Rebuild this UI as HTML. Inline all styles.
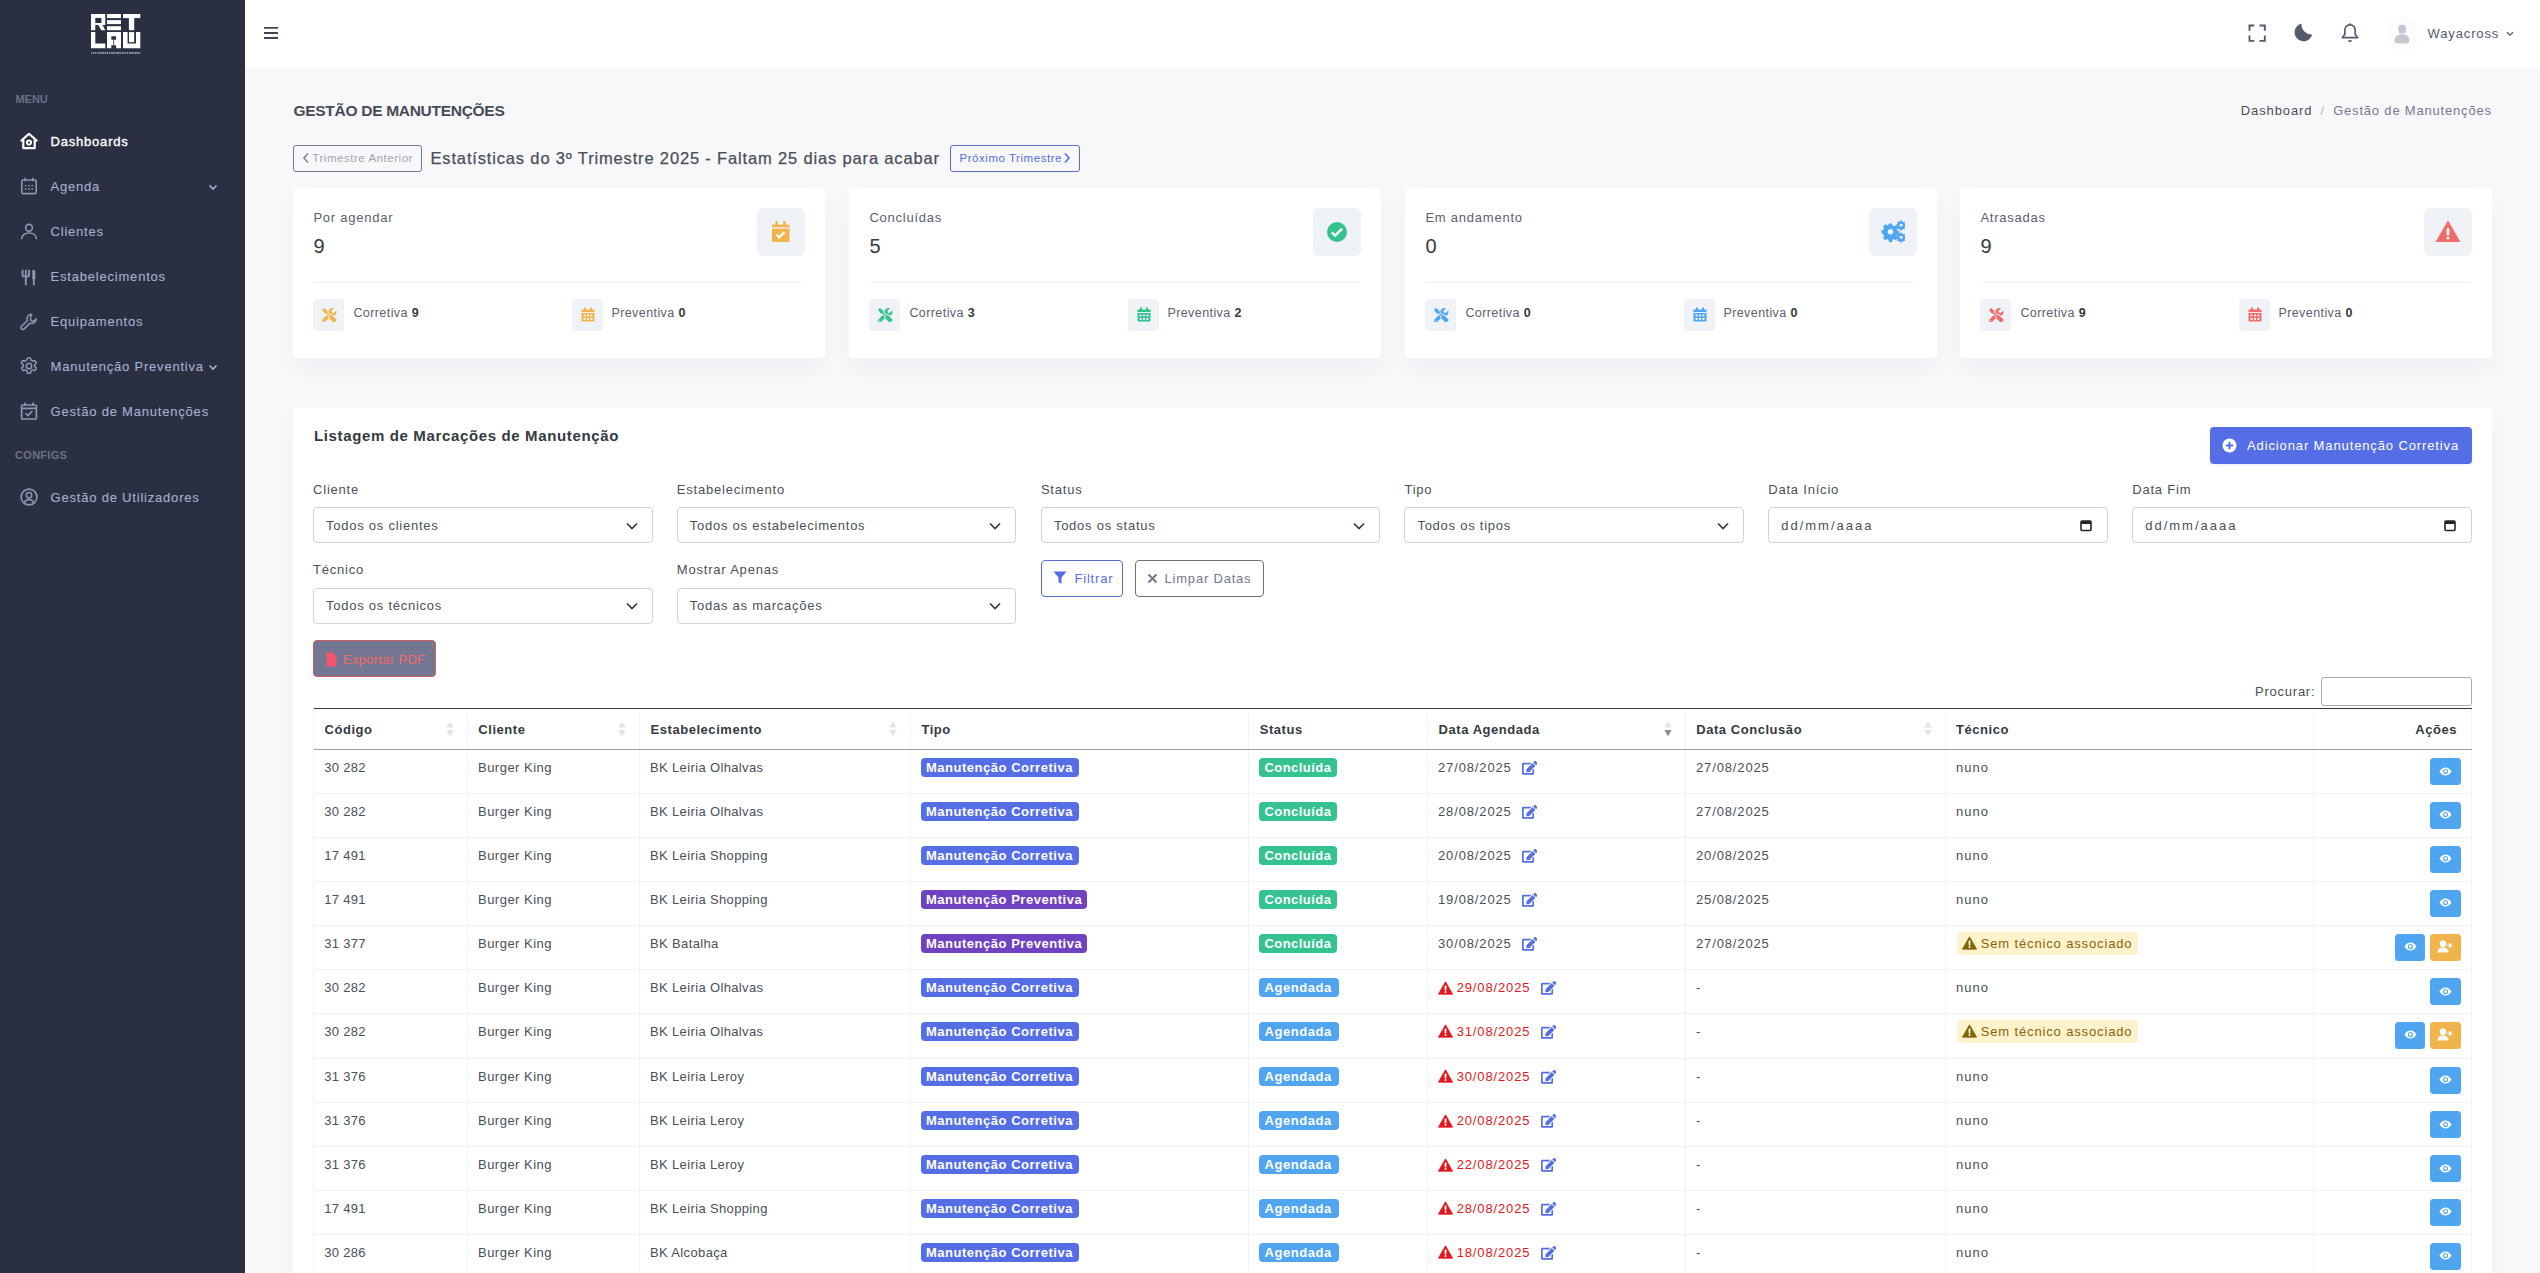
<!DOCTYPE html>
<html><head><meta charset="utf-8"><title>Gestão de Manutenções</title>
<style>
*{box-sizing:border-box;margin:0;padding:0}
html,body{width:2540px;height:1273px;overflow:hidden}
body{background:#f8f8fb;font-family:"Liberation Sans", sans-serif;position:relative;color:#495057}
.t{position:absolute;line-height:1;white-space:nowrap}
svg{display:block}
</style></head><body>
<div style="position:absolute;left:0px;top:0px;width:245px;height:1273px;background:#2a3042"></div><svg style="position:absolute;left:90.8px;top:13.9px;" width="50" height="40" viewBox="0 0 50 40">
<g fill="#fff">
<path d="M0 0H14.3V11H11.5L14.3 16.2H10.2L7.4 11H4.3V16.2H0Z M4.3 4.1V8.9H10.4V4.1Z" fill-rule="evenodd"/>
<rect x="16" y="0" width="14" height="4.1"/><rect x="16" y="6.1" width="14" height="4"/><rect x="16" y="12.2" width="14" height="4"/>
<rect x="32" y="0" width="17.3" height="4.1"/><rect x="37.9" y="0" width="5.3" height="16.2"/>
<path d="M0 18.1H4.3V29.5H14.3V34.3H0Z"/>
<path d="M16 18.1H30V34.3H25.1V31.3H20.3V34.3H16Z M20.3 22.2V25.7H25.1V22.2Z" fill-rule="evenodd"/>
<path d="M32 18.1H36.6V29.5H45V18.1H49.3V34.3H32Z"/><rect x="22.3" y="25.7" width="0.8" height="5.6" fill="#2a3042"/><rect x="38" y="18.1" width="5.2" height="10.1"/>
<g opacity="0.55"><rect x="0.20" y="38.1" width="0.98" height="1.7"/><rect x="1.78" y="38.1" width="1.19" height="1.7"/><rect x="3.62" y="38.1" width="1.60" height="1.7"/><rect x="5.51" y="38.1" width="0.62" height="1.7"/><rect x="6.93" y="38.1" width="1.01" height="1.7"/><rect x="8.35" y="38.1" width="2.19" height="1.7"/><rect x="11.09" y="38.1" width="1.94" height="1.7"/><rect x="13.59" y="38.1" width="1.62" height="1.7"/><rect x="15.56" y="38.1" width="1.62" height="1.7"/><rect x="17.99" y="38.1" width="1.44" height="1.7"/><rect x="20.16" y="38.1" width="1.67" height="1.7"/><rect x="22.13" y="38.1" width="1.81" height="1.7"/><rect x="24.57" y="38.1" width="1.08" height="1.7"/><rect x="25.93" y="38.1" width="1.98" height="1.7"/><rect x="28.47" y="38.1" width="1.75" height="1.7"/><rect x="31.04" y="38.1" width="1.74" height="1.7"/><rect x="33.63" y="38.1" width="1.23" height="1.7"/><rect x="35.63" y="38.1" width="1.31" height="1.7"/><rect x="37.80" y="38.1" width="2.01" height="1.7"/><rect x="40.12" y="38.1" width="0.82" height="1.7"/><rect x="41.33" y="38.1" width="2.14" height="1.7"/><rect x="44.01" y="38.1" width="1.60" height="1.7"/><rect x="46.06" y="38.1" width="1.41" height="1.7"/><rect x="47.97" y="38.1" width="1.16" height="1.7"/></g>
</g></svg><div class="t" style="left:15.40px;top:93.79px;font-size:11px;font-weight:700;color:#6a7187;letter-spacing:0.0px;">MENU</div><div class="t" style="left:15.10px;top:449.99px;font-size:11px;font-weight:700;color:#6a7187;letter-spacing:0.27px;">CONFIGS</div><div class="t" style="left:50.50px;top:135.00px;font-size:13px;color:#ffffff;letter-spacing:0.8px;-webkit-text-stroke:0.35px #fff;">Dashboards</div><svg style="position:absolute;left:20px;top:132.3px;" width="18" height="18" viewBox="0 0 18 18"><path d="M1.4 8.6L9 1.8l7.6 6.8" fill="none" stroke="#ffffff" stroke-width="2.2" stroke-linejoin="round" stroke-linecap="round"/><path d="M3.3 7.6V16.2h11.4V7.6" fill="none" stroke="#ffffff" stroke-width="2.2" stroke-linejoin="round"/><circle cx="9" cy="10.6" r="2.1" fill="none" stroke="#ffffff" stroke-width="1.9"/></svg><div class="t" style="left:50.50px;top:180.00px;font-size:13px;color:#a6b0cf;letter-spacing:0.8px;-webkit-text-stroke:0.1px #a6b0cf;">Agenda</div><svg style="position:absolute;left:20px;top:177.3px;" width="18" height="18" viewBox="0 0 18 18"><rect x="1.8" y="3" width="14.4" height="13.6" rx="1" fill="none" stroke="#8d96b1" stroke-width="1.6"/><path d="M5 0.8v3.4M13 0.8v3.4" stroke="#8d96b1" stroke-width="1.6"/><path d="M4.8 8.6h1.8M8.1 8.6h1.8M11.4 8.6h1.8M4.8 12h1.8M8.1 12h1.8M11.4 12h1.8" stroke="#8d96b1" stroke-width="1.4"/></svg><div class="t" style="left:50.50px;top:225.00px;font-size:13px;color:#a6b0cf;letter-spacing:0.8px;-webkit-text-stroke:0.1px #a6b0cf;">Clientes</div><svg style="position:absolute;left:20px;top:222.5px;" width="18" height="18" viewBox="0 0 18 18"><circle cx="9" cy="4.8" r="3.4" fill="none" stroke="#8d96b1" stroke-width="1.6"/><path d="M1.6 16.2c0-3.8 3.2-6.2 7.4-6.2s7.4 2.4 7.4 6.2" fill="none" stroke="#8d96b1" stroke-width="1.6"/></svg><div class="t" style="left:50.50px;top:270.00px;font-size:13px;color:#a6b0cf;letter-spacing:0.8px;-webkit-text-stroke:0.1px #a6b0cf;">Estabelecimentos</div><svg style="position:absolute;left:20px;top:268.5px;" width="18" height="18" viewBox="0 0 18 18"><path d="M2.6 0.8v6.6M5.8 0.8v6.6M9 0.8v6.6M2.6 7.4h6.4M5.8 7.4v8.8" fill="none" stroke="#8d96b1" stroke-width="1.9"/><path d="M12.3 0.9h1.6c.8 0 1.4.6 1.4 1.4v7.6h-3z" fill="#8d96b1"/><path d="M13.8 8.5v7.8" stroke="#8d96b1" stroke-width="1.9"/></svg><div class="t" style="left:50.50px;top:315.40px;font-size:13px;color:#a6b0cf;letter-spacing:0.8px;-webkit-text-stroke:0.1px #a6b0cf;">Equipamentos</div><svg style="position:absolute;left:20px;top:312.5px;" width="18" height="18" viewBox="0 0 18 18"><path d="M11.6 1.2a4.6 4.6 0 0 0-4.2 6.3L1.6 13.3a1.8 1.8 0 0 0 2.6 2.6l5.8-5.8a4.6 4.6 0 0 0 6.3-4.2l-2.6 2.4-2.6-.6-.6-2.6z" fill="none" stroke="#8d96b1" stroke-width="1.5" stroke-linejoin="round"/></svg><div class="t" style="left:50.50px;top:360.20px;font-size:13px;color:#a6b0cf;letter-spacing:0.8px;-webkit-text-stroke:0.1px #a6b0cf;">Manutenção Preventiva</div><svg style="position:absolute;left:20px;top:357.2px;" width="18" height="18" viewBox="0 0 18 18"><circle cx="9" cy="9" r="2.7" fill="none" stroke="#8d96b1" stroke-width="1.6"/><path d="M7.5 1h3l.5 2.2 1.7 1 2.2-.8 1.5 2.6-1.7 1.6v2l1.7 1.5-1.5 2.6-2.2-.8-1.7 1-.5 2.3h-3l-.5-2.3-1.7-1-2.2.8-1.5-2.6 1.7-1.5v-2L1.1 6l1.5-2.6 2.2.8 1.7-1z" fill="none" stroke="#8d96b1" stroke-width="1.5" stroke-linejoin="round"/></svg><div class="t" style="left:50.50px;top:405.20px;font-size:13px;color:#a6b0cf;letter-spacing:0.8px;-webkit-text-stroke:0.1px #a6b0cf;">Gestão de Manutenções</div><svg style="position:absolute;left:20px;top:402.3px;" width="18" height="18" viewBox="0 0 18 18"><rect x="1.6" y="3" width="14.8" height="14" rx="1" fill="none" stroke="#8d96b1" stroke-width="1.7"/><path d="M5 0.6v3.4M13 0.6v3.4M1.6 6.4h14.8" stroke="#8d96b1" stroke-width="1.7"/><path d="M5.6 11.2l2.3 2.3 4.4-4.4" fill="none" stroke="#8d96b1" stroke-width="1.6"/></svg><div class="t" style="left:50.50px;top:490.80px;font-size:13px;color:#a6b0cf;letter-spacing:0.8px;-webkit-text-stroke:0.1px #a6b0cf;">Gestão de Utilizadores</div><svg style="position:absolute;left:20px;top:487.5px;" width="18" height="18" viewBox="0 0 18 18"><circle cx="9" cy="9" r="7.9" fill="none" stroke="#8d96b1" stroke-width="1.6"/><circle cx="9" cy="7.3" r="2.7" fill="none" stroke="#8d96b1" stroke-width="1.5"/><path d="M4.1 14.8c1-2.1 2.8-3.2 4.9-3.2s3.9 1.1 4.9 3.2" fill="none" stroke="#8d96b1" stroke-width="1.5"/></svg><svg style="position:absolute;left:207.5px;top:184px;" width="10" height="7" viewBox="0 0 10 7"><path d="M1.5 1.5l3.5 3.5 3.5-3.5" fill="none" stroke="#a6b0cf" stroke-width="1.6"/></svg><svg style="position:absolute;left:208px;top:363.5px;" width="10" height="7" viewBox="0 0 10 7"><path d="M1.5 1.5l3.5 3.5 3.5-3.5" fill="none" stroke="#a6b0cf" stroke-width="1.6"/></svg><div style="position:absolute;left:245px;top:0px;width:2295px;height:69px;background:#fff;box-shadow:0 0 6px rgba(0,0,0,0.03)"></div><svg style="position:absolute;left:264px;top:26px;" width="14" height="14" viewBox="0 0 14 14"><path d="M0 1.9h14M0 7h14M0 12h14" stroke="#42454f" stroke-width="1.9"/></svg><svg style="position:absolute;left:2248px;top:23.5px;" width="18" height="18" viewBox="0 0 18 18"><path d="M1.5 6.8V1.5H6.3M11.5 1.5h5.3V6.8M16.8 11.6v5.3H11.5M6.3 16.9H1.5V11.6" fill="none" stroke="#555b6d" stroke-width="1.9"/></svg><svg style="position:absolute;left:2293.5px;top:22.5px;" width="19" height="19" viewBox="0 0 19 19"><path d="M7.5 0.5A9 9 0 1 0 18.2 11.5A10.3 10.3 0 0 1 7.5 0.5z" fill="#555b6d"/></svg><svg style="position:absolute;left:2340.5px;top:22.5px;" width="18" height="20" viewBox="0 0 18 20"><path d="M9 1.8C5.6 1.8 3.8 4.4 3.8 7.8v3.6L1.3 14.6h15.4l-2.5-3.2V7.8C14.2 4.4 12.4 1.8 9 1.8z" fill="none" stroke="#555b6d" stroke-width="1.7" stroke-linejoin="round"/><circle cx="9" cy="1.3" r="1" fill="#555b6d"/><path d="M7 17.2h4c0 1-.9 1.8-2 1.8s-2-.8-2-1.8z" fill="#555b6d"/></svg><div style="position:absolute;left:2386px;top:17px;width:33px;height:34px;border-radius:50%;background:#fcfcfd"></div><svg style="position:absolute;left:2393px;top:24px;" width="18" height="20" viewBox="0 0 18 20"><rect x="5.3" y="0.8" width="7.6" height="8.6" rx="3" fill="#c6c8d2"/><path d="M1.6 16.4c0-3.8 2.6-6.2 7.4-6.2s7.4 2.4 7.4 6.2c0 1.8-1.2 3-3 3H4.6c-1.8 0-3-1.2-3-3z" fill="#c6c8d2"/></svg><div class="t" style="left:2427.60px;top:27.20px;font-size:13px;color:#555b6d;letter-spacing:0.86px;">Wayacross</div><svg style="position:absolute;left:2506px;top:30.5px;" width="8" height="6" viewBox="0 0 8 6"><path d="M1 1.2l3 3 3-3" fill="none" stroke="#555b6d" stroke-width="1.3"/></svg><div class="t" style="left:293.50px;top:102.88px;font-size:15.5px;font-weight:700;color:#454b54;letter-spacing:-0.29px;">GESTÃO DE MANUTENÇÕES</div><div class="t" style="right:227.60px;top:104.10px;font-size:13px;color:#495057;letter-spacing:0.89px;">Dashboard</div><div class="t" style="left:2320.50px;top:104.10px;font-size:13px;color:#b3b7c0;letter-spacing:0px;">/</div><div class="t" style="right:48.20px;top:104.10px;font-size:13px;color:#74788d;letter-spacing:0.81px;">Gestão de Manutenções</div><div style="position:absolute;left:293px;top:145px;width:129px;height:27px;border:1px solid #74788d;border-radius:3px"></div><svg style="position:absolute;left:302px;top:152px;" width="8" height="12" viewBox="0 0 8 12"><path d="M6 1.5L2 6l4 4.5" fill="none" stroke="#8a8e9c" stroke-width="1.7"/></svg><div class="t" style="left:312.30px;top:152.57px;font-size:11.5px;color:#a0a4b2;letter-spacing:0.54px;">Trimestre Anterior</div><div class="t" style="left:430.50px;top:149.83px;font-size:16.5px;color:#495057;letter-spacing:0.84px;-webkit-text-stroke:0.25px #495057;">Estatísticas do 3º Trimestre 2025 - Faltam 25 dias para acabar</div><div style="position:absolute;left:950px;top:145px;width:130px;height:27px;border:1px solid #5a6bd0;border-radius:3px"></div><div class="t" style="left:959.50px;top:152.57px;font-size:11.5px;color:#556ee6;letter-spacing:0.54px;">Próximo Trimestre</div><svg style="position:absolute;left:1063px;top:152px;" width="8" height="12" viewBox="0 0 8 12"><path d="M2 1.5L6 6l-4 4.5" fill="none" stroke="#556ee6" stroke-width="1.7"/></svg><div style="position:absolute;left:293px;top:188px;width:531.5px;height:169.5px;background:#fff;border-radius:4px;box-shadow:0 0.75rem 1.5rem rgba(18,38,63,.03)"></div><div class="t" style="left:313.40px;top:210.80px;font-size:13px;color:#5b606f;letter-spacing:0.77px;">Por agendar</div><div class="t" style="left:313.60px;top:236.07px;font-size:20px;color:#343a40;letter-spacing:0px;">9</div><div style="position:absolute;left:757px;top:208.2px;width:47.5px;height:47.5px;background:#eff2f7;border-radius:6px"></div><svg style="position:absolute;left:769px;top:220px;" width="24" height="24" viewBox="0 0 24 24"><path d="M3 4.6h17.6v17.3H3z" fill="#f1b44c"/><rect x="6.4" y="1" width="2.4" height="5" rx="0.8" fill="#f1b44c"/><rect x="14.2" y="1" width="2.4" height="5" rx="0.8" fill="#f1b44c"/><rect x="3" y="7.3" width="17.6" height="1.3" fill="#eff2f7"/><path d="M7.6 14.8l2.6 2.6 5.4-5.4" fill="none" stroke="#fff" stroke-width="2.3"/></svg><div style="position:absolute;left:313.4px;top:282px;width:491px;height:1px;background:#eff2f7"></div><div style="position:absolute;left:313.4px;top:298.7px;width:31px;height:32px;background:#eff2f7;border-radius:4px"></div><svg style="position:absolute;left:322px;top:307.5px;" width="14.5" height="14.5" viewBox="0 0 512 512"><path fill="#f1b44c" d="M501.1 395.7L384 278.6c-23.1-23.1-57.6-27.6-85.4-13.9L192 158.1V96L64 0 0 64l96 128h62.1l106.6 106.6c-13.6 27.8-9.2 62.3 13.9 85.4l117.1 117.1c14.6 14.6 38.2 14.6 52.7 0l52.7-52.7c14.5-14.6 14.5-38.2 0-52.7zM331.7 225c28.3 0 54.9 11 74.9 31l19.4 19.4c15.8-6.9 30.8-16.5 43.8-29.5 37.1-37.1 49.7-89.3 37.9-136.7-2.2-9-13.5-12.1-20.1-5.5l-74.4 74.4-67.9-11.3L334 98.9l74.4-74.4c6.6-6.6 3.4-17.9-5.7-20.2-47.4-11.7-99.6.9-136.6 37.9-28.5 28.5-41.9 66.1-41.2 103.6l82.1 82.1c8.1-1.9 16.5-2.9 24.7-2.9zm-103.9 82l-56.7-56.7L18.7 402.8c-25 25-25 65.5 0 90.5s65.5 25 90.5 0l123.6-123.6c-7.6-19.9-9.9-41.6-5-62.7zM64 472c-13.2 0-24-10.8-24-24 0-13.3 10.7-24 24-24s24 10.7 24 24c0 13.2-10.7 24-24 24z"/></svg><div class="t" style="left:353.40px;top:306.62px;font-size:12.5px;color:#5b606f;letter-spacing:0.42px;">Corretiva <b style="color:#343a40">9</b></div><div style="position:absolute;left:571.7px;top:298.7px;width:31px;height:32px;background:#eff2f7;border-radius:4px"></div><svg style="position:absolute;left:580.7px;top:307px;" width="14" height="15" viewBox="0 0 14 15"><g fill="#f1b44c"><rect x="0.5" y="2.5" width="13" height="12" rx="0.8"/><rect x="3" y="0.5" width="2" height="3" rx="0.5"/><rect x="9" y="0.5" width="2" height="3" rx="0.5"/></g><rect x="0.5" y="5" width="13" height="1" fill="#eff2f7"/><g fill="#fff"><rect x="2.6" y="7.6" width="2" height="1.8"/><rect x="6" y="7.6" width="2" height="1.8"/><rect x="9.4" y="7.6" width="2" height="1.8"/><rect x="2.6" y="11" width="2" height="1.8"/><rect x="6" y="11" width="2" height="1.8"/><rect x="9.4" y="11" width="2" height="1.8"/></g></svg><div class="t" style="left:611.40px;top:306.62px;font-size:12.5px;color:#5b606f;letter-spacing:0.42px;">Preventiva <b style="color:#343a40">0</b></div><div style="position:absolute;left:849px;top:188px;width:531.5px;height:169.5px;background:#fff;border-radius:4px;box-shadow:0 0.75rem 1.5rem rgba(18,38,63,.03)"></div><div class="t" style="left:869.40px;top:210.80px;font-size:13px;color:#5b606f;letter-spacing:0.77px;">Concluídas</div><div class="t" style="left:869.60px;top:236.07px;font-size:20px;color:#343a40;letter-spacing:0px;">5</div><div style="position:absolute;left:1313px;top:208.2px;width:47.5px;height:47.5px;background:#eff2f7;border-radius:6px"></div><svg style="position:absolute;left:1325px;top:220px;" width="24" height="24" viewBox="0 0 24 24"><circle cx="12" cy="12" r="10" fill="#34c38f"/><path d="M6.8 12.3l3.3 3.3 7-7" fill="none" stroke="#fff" stroke-width="2.4"/></svg><div style="position:absolute;left:869.4px;top:282px;width:491px;height:1px;background:#eff2f7"></div><div style="position:absolute;left:869.4px;top:298.7px;width:31px;height:32px;background:#eff2f7;border-radius:4px"></div><svg style="position:absolute;left:878px;top:307.5px;" width="14.5" height="14.5" viewBox="0 0 512 512"><path fill="#34c38f" d="M501.1 395.7L384 278.6c-23.1-23.1-57.6-27.6-85.4-13.9L192 158.1V96L64 0 0 64l96 128h62.1l106.6 106.6c-13.6 27.8-9.2 62.3 13.9 85.4l117.1 117.1c14.6 14.6 38.2 14.6 52.7 0l52.7-52.7c14.5-14.6 14.5-38.2 0-52.7zM331.7 225c28.3 0 54.9 11 74.9 31l19.4 19.4c15.8-6.9 30.8-16.5 43.8-29.5 37.1-37.1 49.7-89.3 37.9-136.7-2.2-9-13.5-12.1-20.1-5.5l-74.4 74.4-67.9-11.3L334 98.9l74.4-74.4c6.6-6.6 3.4-17.9-5.7-20.2-47.4-11.7-99.6.9-136.6 37.9-28.5 28.5-41.9 66.1-41.2 103.6l82.1 82.1c8.1-1.9 16.5-2.9 24.7-2.9zm-103.9 82l-56.7-56.7L18.7 402.8c-25 25-25 65.5 0 90.5s65.5 25 90.5 0l123.6-123.6c-7.6-19.9-9.9-41.6-5-62.7zM64 472c-13.2 0-24-10.8-24-24 0-13.3 10.7-24 24-24s24 10.7 24 24c0 13.2-10.7 24-24 24z"/></svg><div class="t" style="left:909.40px;top:306.62px;font-size:12.5px;color:#5b606f;letter-spacing:0.42px;">Corretiva <b style="color:#343a40">3</b></div><div style="position:absolute;left:1127.7px;top:298.7px;width:31px;height:32px;background:#eff2f7;border-radius:4px"></div><svg style="position:absolute;left:1136.7px;top:307px;" width="14" height="15" viewBox="0 0 14 15"><g fill="#34c38f"><rect x="0.5" y="2.5" width="13" height="12" rx="0.8"/><rect x="3" y="0.5" width="2" height="3" rx="0.5"/><rect x="9" y="0.5" width="2" height="3" rx="0.5"/></g><rect x="0.5" y="5" width="13" height="1" fill="#eff2f7"/><g fill="#fff"><rect x="2.6" y="7.6" width="2" height="1.8"/><rect x="6" y="7.6" width="2" height="1.8"/><rect x="9.4" y="7.6" width="2" height="1.8"/><rect x="2.6" y="11" width="2" height="1.8"/><rect x="6" y="11" width="2" height="1.8"/><rect x="9.4" y="11" width="2" height="1.8"/></g></svg><div class="t" style="left:1167.40px;top:306.62px;font-size:12.5px;color:#5b606f;letter-spacing:0.42px;">Preventiva <b style="color:#343a40">2</b></div><div style="position:absolute;left:1405px;top:188px;width:531.5px;height:169.5px;background:#fff;border-radius:4px;box-shadow:0 0.75rem 1.5rem rgba(18,38,63,.03)"></div><div class="t" style="left:1425.40px;top:210.80px;font-size:13px;color:#5b606f;letter-spacing:0.77px;">Em andamento</div><div class="t" style="left:1425.60px;top:236.07px;font-size:20px;color:#343a40;letter-spacing:0px;">0</div><div style="position:absolute;left:1869px;top:208.2px;width:47.5px;height:47.5px;background:#eff2f7;border-radius:6px"></div><svg style="position:absolute;left:1881px;top:220px;" width="24" height="24" viewBox="0 0 24 24"><g fill="#50a5f1"><path d="M8 3.5h3l.4 2 1.6.8 1.8-1.1 2.1 2.1-1.1 1.8.7 1.7 2 .4v3l-2 .4-.7 1.7 1.1 1.8-2.1 2.1-1.8-1.1-1.6.7-.4 2.1H8l-.4-2.1-1.7-.7-1.8 1.1-2.1-2.1 1.1-1.8-.7-1.7L.5 13.3v-3l1.9-.4.7-1.7L2 6.4l2.1-2.1 1.8 1.1 1.7-.8z M9.5 9a2.8 2.8 0 1 0 0.01 0z" fill-rule="evenodd"/><path d="M19.3 0.6h1.6l.2 1.1 1 .5.9-.6 1.1 1.1-.6.9.4 1 1.1.2v1.6l-1.1.2-.4 1 .6.9-1.1 1.1-.9-.6-1 .4-.2 1.1h-1.6l-.2-1.1-1-.4-.9.6-1.1-1.1.6-.9-.4-1-1.1-.2V4.5l1.1-.2.4-1-.6-.9 1.1-1.1.9.6 1-.5z M20.1 3.8a1.5 1.5 0 1 0 .01 0z" fill-rule="evenodd"/><path d="M19.3 12.6h1.6l.2 1.1 1 .5.9-.6 1.1 1.1-.6.9.4 1 1.1.2v1.6l-1.1.2-.4 1 .6.9-1.1 1.1-.9-.6-1 .4-.2 1.1h-1.6l-.2-1.1-1-.4-.9.6-1.1-1.1.6-.9-.4-1-1.1-.2v-1.6l1.1-.2.4-1-.6-.9 1.1-1.1.9.6 1-.5z M20.1 15.8a1.5 1.5 0 1 0 .01 0z" fill-rule="evenodd"/></g></svg><div style="position:absolute;left:1425.4px;top:282px;width:491px;height:1px;background:#eff2f7"></div><div style="position:absolute;left:1425.4px;top:298.7px;width:31px;height:32px;background:#eff2f7;border-radius:4px"></div><svg style="position:absolute;left:1434px;top:307.5px;" width="14.5" height="14.5" viewBox="0 0 512 512"><path fill="#50a5f1" d="M501.1 395.7L384 278.6c-23.1-23.1-57.6-27.6-85.4-13.9L192 158.1V96L64 0 0 64l96 128h62.1l106.6 106.6c-13.6 27.8-9.2 62.3 13.9 85.4l117.1 117.1c14.6 14.6 38.2 14.6 52.7 0l52.7-52.7c14.5-14.6 14.5-38.2 0-52.7zM331.7 225c28.3 0 54.9 11 74.9 31l19.4 19.4c15.8-6.9 30.8-16.5 43.8-29.5 37.1-37.1 49.7-89.3 37.9-136.7-2.2-9-13.5-12.1-20.1-5.5l-74.4 74.4-67.9-11.3L334 98.9l74.4-74.4c6.6-6.6 3.4-17.9-5.7-20.2-47.4-11.7-99.6.9-136.6 37.9-28.5 28.5-41.9 66.1-41.2 103.6l82.1 82.1c8.1-1.9 16.5-2.9 24.7-2.9zm-103.9 82l-56.7-56.7L18.7 402.8c-25 25-25 65.5 0 90.5s65.5 25 90.5 0l123.6-123.6c-7.6-19.9-9.9-41.6-5-62.7zM64 472c-13.2 0-24-10.8-24-24 0-13.3 10.7-24 24-24s24 10.7 24 24c0 13.2-10.7 24-24 24z"/></svg><div class="t" style="left:1465.40px;top:306.62px;font-size:12.5px;color:#5b606f;letter-spacing:0.42px;">Corretiva <b style="color:#343a40">0</b></div><div style="position:absolute;left:1683.7px;top:298.7px;width:31px;height:32px;background:#eff2f7;border-radius:4px"></div><svg style="position:absolute;left:1692.7px;top:307px;" width="14" height="15" viewBox="0 0 14 15"><g fill="#50a5f1"><rect x="0.5" y="2.5" width="13" height="12" rx="0.8"/><rect x="3" y="0.5" width="2" height="3" rx="0.5"/><rect x="9" y="0.5" width="2" height="3" rx="0.5"/></g><rect x="0.5" y="5" width="13" height="1" fill="#eff2f7"/><g fill="#fff"><rect x="2.6" y="7.6" width="2" height="1.8"/><rect x="6" y="7.6" width="2" height="1.8"/><rect x="9.4" y="7.6" width="2" height="1.8"/><rect x="2.6" y="11" width="2" height="1.8"/><rect x="6" y="11" width="2" height="1.8"/><rect x="9.4" y="11" width="2" height="1.8"/></g></svg><div class="t" style="left:1723.40px;top:306.62px;font-size:12.5px;color:#5b606f;letter-spacing:0.42px;">Preventiva <b style="color:#343a40">0</b></div><div style="position:absolute;left:1960px;top:188px;width:531.5px;height:169.5px;background:#fff;border-radius:4px;box-shadow:0 0.75rem 1.5rem rgba(18,38,63,.03)"></div><div class="t" style="left:1980.40px;top:210.80px;font-size:13px;color:#5b606f;letter-spacing:0.77px;">Atrasadas</div><div class="t" style="left:1980.60px;top:236.07px;font-size:20px;color:#343a40;letter-spacing:0px;">9</div><div style="position:absolute;left:2424px;top:208.2px;width:47.5px;height:47.5px;background:#eff2f7;border-radius:6px"></div><svg style="position:absolute;left:2436px;top:220px;" width="24" height="24" viewBox="0 0 24 24"><path d="M12 1.5L23.5 21.5H0.5z" fill="#f46a6a" stroke="#f46a6a" stroke-width="1.2" stroke-linejoin="round"/><rect x="10.7" y="8" width="2.6" height="7.5" rx="1" fill="#fff"/><circle cx="12" cy="18.2" r="1.4" fill="#fff"/></svg><div style="position:absolute;left:1980.4px;top:282px;width:491px;height:1px;background:#eff2f7"></div><div style="position:absolute;left:1980.4px;top:298.7px;width:31px;height:32px;background:#eff2f7;border-radius:4px"></div><svg style="position:absolute;left:1989px;top:307.5px;" width="14.5" height="14.5" viewBox="0 0 512 512"><path fill="#f46a6a" d="M501.1 395.7L384 278.6c-23.1-23.1-57.6-27.6-85.4-13.9L192 158.1V96L64 0 0 64l96 128h62.1l106.6 106.6c-13.6 27.8-9.2 62.3 13.9 85.4l117.1 117.1c14.6 14.6 38.2 14.6 52.7 0l52.7-52.7c14.5-14.6 14.5-38.2 0-52.7zM331.7 225c28.3 0 54.9 11 74.9 31l19.4 19.4c15.8-6.9 30.8-16.5 43.8-29.5 37.1-37.1 49.7-89.3 37.9-136.7-2.2-9-13.5-12.1-20.1-5.5l-74.4 74.4-67.9-11.3L334 98.9l74.4-74.4c6.6-6.6 3.4-17.9-5.7-20.2-47.4-11.7-99.6.9-136.6 37.9-28.5 28.5-41.9 66.1-41.2 103.6l82.1 82.1c8.1-1.9 16.5-2.9 24.7-2.9zm-103.9 82l-56.7-56.7L18.7 402.8c-25 25-25 65.5 0 90.5s65.5 25 90.5 0l123.6-123.6c-7.6-19.9-9.9-41.6-5-62.7zM64 472c-13.2 0-24-10.8-24-24 0-13.3 10.7-24 24-24s24 10.7 24 24c0 13.2-10.7 24-24 24z"/></svg><div class="t" style="left:2020.40px;top:306.62px;font-size:12.5px;color:#5b606f;letter-spacing:0.42px;">Corretiva <b style="color:#343a40">9</b></div><div style="position:absolute;left:2238.7px;top:298.7px;width:31px;height:32px;background:#eff2f7;border-radius:4px"></div><svg style="position:absolute;left:2247.7px;top:307px;" width="14" height="15" viewBox="0 0 14 15"><g fill="#f46a6a"><rect x="0.5" y="2.5" width="13" height="12" rx="0.8"/><rect x="3" y="0.5" width="2" height="3" rx="0.5"/><rect x="9" y="0.5" width="2" height="3" rx="0.5"/></g><rect x="0.5" y="5" width="13" height="1" fill="#eff2f7"/><g fill="#fff"><rect x="2.6" y="7.6" width="2" height="1.8"/><rect x="6" y="7.6" width="2" height="1.8"/><rect x="9.4" y="7.6" width="2" height="1.8"/><rect x="2.6" y="11" width="2" height="1.8"/><rect x="6" y="11" width="2" height="1.8"/><rect x="9.4" y="11" width="2" height="1.8"/></g></svg><div class="t" style="left:2278.40px;top:306.62px;font-size:12.5px;color:#5b606f;letter-spacing:0.42px;">Preventiva <b style="color:#343a40">0</b></div><div style="position:absolute;left:293px;top:407.5px;width:2199px;height:880px;background:#fff;border-radius:4px;box-shadow:0 0.75rem 1.5rem rgba(18,38,63,.03)"></div><div class="t" style="left:314.00px;top:428.30px;font-size:15px;font-weight:700;color:#343a40;letter-spacing:0.64px;">Listagem de Marcações de Manutenção</div><div style="position:absolute;left:2210px;top:427px;width:262px;height:37px;background:#556ee6;border-radius:4px;box-shadow:0 1px 3px rgba(85,110,230,.12)"></div><svg style="position:absolute;left:2222px;top:437.5px;" width="15" height="15" viewBox="0 0 15 15"><circle cx="7.5" cy="7.5" r="7" fill="#fff"/><path d="M7.5 3.8v7.4M3.8 7.5h7.4" stroke="#556ee6" stroke-width="2"/></svg><div class="t" style="left:2247.00px;top:439.20px;font-size:13px;color:#ffffff;letter-spacing:0.88px;">Adicionar Manutenção Corretiva</div><div class="t" style="left:313.00px;top:482.80px;font-size:13px;color:#495057;letter-spacing:0.8px;">Cliente</div><div style="position:absolute;left:313px;top:507.2px;width:339.6px;height:36.3px;background:#fff;border:1px solid #ced4da;border-radius:4px"></div><div class="t" style="left:326.00px;top:519.00px;font-size:13px;color:#495057;letter-spacing:0.75px;">Todos os clientes</div><svg style="position:absolute;left:625.5px;top:521.6px;" width="12" height="9" viewBox="0 0 12 9"><path d="M1 1.5l5 5 5-5" fill="none" stroke="#343a40" stroke-width="1.7"/></svg><div class="t" style="left:676.80px;top:482.80px;font-size:13px;color:#495057;letter-spacing:0.8px;">Estabelecimento</div><div style="position:absolute;left:676.8px;top:507.2px;width:339.6px;height:36.3px;background:#fff;border:1px solid #ced4da;border-radius:4px"></div><div class="t" style="left:689.80px;top:519.00px;font-size:13px;color:#495057;letter-spacing:0.75px;">Todos os estabelecimentos</div><svg style="position:absolute;left:989.3px;top:521.6px;" width="12" height="9" viewBox="0 0 12 9"><path d="M1 1.5l5 5 5-5" fill="none" stroke="#343a40" stroke-width="1.7"/></svg><div class="t" style="left:1040.90px;top:482.80px;font-size:13px;color:#495057;letter-spacing:0.8px;">Status</div><div style="position:absolute;left:1040.9px;top:507.2px;width:339.6px;height:36.3px;background:#fff;border:1px solid #ced4da;border-radius:4px"></div><div class="t" style="left:1053.90px;top:519.00px;font-size:13px;color:#495057;letter-spacing:0.75px;">Todos os status</div><svg style="position:absolute;left:1353.4px;top:521.6px;" width="12" height="9" viewBox="0 0 12 9"><path d="M1 1.5l5 5 5-5" fill="none" stroke="#343a40" stroke-width="1.7"/></svg><div class="t" style="left:1404.40px;top:482.80px;font-size:13px;color:#495057;letter-spacing:0.8px;">Tipo</div><div style="position:absolute;left:1404.4px;top:507.2px;width:339.6px;height:36.3px;background:#fff;border:1px solid #ced4da;border-radius:4px"></div><div class="t" style="left:1417.40px;top:519.00px;font-size:13px;color:#495057;letter-spacing:0.75px;">Todos os tipos</div><svg style="position:absolute;left:1716.9px;top:521.6px;" width="12" height="9" viewBox="0 0 12 9"><path d="M1 1.5l5 5 5-5" fill="none" stroke="#343a40" stroke-width="1.7"/></svg><div class="t" style="left:1768.20px;top:482.80px;font-size:13px;color:#495057;letter-spacing:0.8px;">Data Início</div><div style="position:absolute;left:1768.2px;top:507.2px;width:339.6px;height:36.3px;background:#fff;border:1px solid #ced4da;border-radius:4px"></div><div class="t" style="left:1781.20px;top:519.00px;font-size:13px;color:#495057;letter-spacing:2.0px;">dd/mm/aaaa</div><svg style="position:absolute;left:2079.7px;top:519px;" width="12" height="13" viewBox="0 0 12 13"><rect x="1" y="2" width="10" height="9.5" rx="1" fill="none" stroke="#212529" stroke-width="1.6"/><rect x="1" y="2" width="10" height="3" fill="#212529"/></svg><div class="t" style="left:2132.20px;top:482.80px;font-size:13px;color:#495057;letter-spacing:0.8px;">Data Fim</div><div style="position:absolute;left:2132.2px;top:507.2px;width:339.6px;height:36.3px;background:#fff;border:1px solid #ced4da;border-radius:4px"></div><div class="t" style="left:2145.20px;top:519.00px;font-size:13px;color:#495057;letter-spacing:2.0px;">dd/mm/aaaa</div><svg style="position:absolute;left:2443.7px;top:519px;" width="12" height="13" viewBox="0 0 12 13"><rect x="1" y="2" width="10" height="9.5" rx="1" fill="none" stroke="#212529" stroke-width="1.6"/><rect x="1" y="2" width="10" height="3" fill="#212529"/></svg><div class="t" style="left:313.00px;top:562.80px;font-size:13px;color:#495057;letter-spacing:0.8px;">Técnico</div><div style="position:absolute;left:313px;top:587.6px;width:339.6px;height:36.3px;background:#fff;border:1px solid #ced4da;border-radius:4px"></div><div class="t" style="left:326.00px;top:599.20px;font-size:13px;color:#495057;letter-spacing:0.75px;">Todos os técnicos</div><svg style="position:absolute;left:625.5px;top:601.8px;" width="12" height="9" viewBox="0 0 12 9"><path d="M1 1.5l5 5 5-5" fill="none" stroke="#343a40" stroke-width="1.7"/></svg><div class="t" style="left:676.80px;top:562.80px;font-size:13px;color:#495057;letter-spacing:0.8px;">Mostrar Apenas</div><div style="position:absolute;left:676.8px;top:587.6px;width:339.6px;height:36.3px;background:#fff;border:1px solid #ced4da;border-radius:4px"></div><div class="t" style="left:689.80px;top:599.20px;font-size:13px;color:#495057;letter-spacing:0.75px;">Todas as marcações</div><svg style="position:absolute;left:989.3px;top:601.8px;" width="12" height="9" viewBox="0 0 12 9"><path d="M1 1.5l5 5 5-5" fill="none" stroke="#343a40" stroke-width="1.7"/></svg><div style="position:absolute;left:1041px;top:559.8px;width:82px;height:37px;border:1px solid #5a6bd0;border-radius:4px"></div><svg style="position:absolute;left:1053px;top:571px;" width="14" height="14" viewBox="0 0 14 14"><path d="M0.5 0.5h13L8.5 6.5v6.5L5.5 11V6.5z" fill="#556ee6"/></svg><div class="t" style="left:1074.50px;top:572.00px;font-size:13px;color:#556ee6;letter-spacing:0.8px;">Filtrar</div><div style="position:absolute;left:1135px;top:559.8px;width:128.5px;height:37px;border:1px solid #6f717c;border-radius:4px"></div><svg style="position:absolute;left:1147px;top:573px;" width="11" height="11" viewBox="0 0 11 11"><path d="M1.5 1.5l8 8M9.5 1.5l-8 8" stroke="#74788d" stroke-width="2"/></svg><div class="t" style="left:1164.50px;top:572.00px;font-size:13px;color:#74788d;letter-spacing:0.8px;">Limpar Datas</div><div style="position:absolute;left:313px;top:640px;width:123px;height:37px;background:#737791;border:1px solid #c9605f;border-radius:4px"></div><svg style="position:absolute;left:325.5px;top:651.5px;" width="11" height="15" viewBox="0 0 11 15"><path d="M0.5 1.5a1 1 0 0 1 1-1H7l3.5 3.5V13.5a1 1 0 0 1-1 1h-8a1 1 0 0 1-1-1z" fill="#f5566c"/></svg><div class="t" style="left:343.00px;top:652.50px;font-size:13px;color:#f46a6a;letter-spacing:0.3px;">Exportar PDF</div><div class="t" style="right:224.70px;top:684.50px;font-size:13px;color:#495057;letter-spacing:0.75px;">Procurar:</div><div style="position:absolute;left:2321px;top:677px;width:151px;height:29px;border:1px solid #aaa;border-radius:3px;background:#fff"></div><div style="position:absolute;left:313.0px;top:708.5px;width:1px;height:564.5px;background:#eff2f7"></div><div style="position:absolute;left:466.8px;top:708.5px;width:1px;height:564.5px;background:#eff2f7"></div><div style="position:absolute;left:639.0px;top:708.5px;width:1px;height:564.5px;background:#eff2f7"></div><div style="position:absolute;left:909.9px;top:708.5px;width:1px;height:564.5px;background:#eff2f7"></div><div style="position:absolute;left:1248.2px;top:708.5px;width:1px;height:564.5px;background:#eff2f7"></div><div style="position:absolute;left:1427.1px;top:708.5px;width:1px;height:564.5px;background:#eff2f7"></div><div style="position:absolute;left:1684.7px;top:708.5px;width:1px;height:564.5px;background:#eff2f7"></div><div style="position:absolute;left:1944.5px;top:708.5px;width:1px;height:564.5px;background:#eff2f7"></div><div style="position:absolute;left:2312.7px;top:708.5px;width:1px;height:564.5px;background:#eff2f7"></div><div style="position:absolute;left:2470.9px;top:708.5px;width:1px;height:564.5px;background:#eff2f7"></div><div style="position:absolute;left:313.5px;top:708.0px;width:2158px;height:1px;background:#343a40"></div><div style="position:absolute;left:313.5px;top:749.0px;width:2158px;height:1.3px;background:#a0a0a0"></div><div class="t" style="left:324.50px;top:722.80px;font-size:13px;font-weight:700;color:#343a40;letter-spacing:0.55px;">Código</div><svg style="position:absolute;left:445.8px;top:720.8px;" width="8" height="16" viewBox="0 0 8 16"><path d="M4 0.6L7.6 6.6H0.4z" fill="#e3e3e3"/><path d="M4 15.2L7.6 9.0H0.4z" fill="#e3e3e3"/></svg><div class="t" style="left:478.30px;top:722.80px;font-size:13px;font-weight:700;color:#343a40;letter-spacing:0.55px;">Cliente</div><svg style="position:absolute;left:618.0px;top:720.8px;" width="8" height="16" viewBox="0 0 8 16"><path d="M4 0.6L7.6 6.6H0.4z" fill="#e3e3e3"/><path d="M4 15.2L7.6 9.0H0.4z" fill="#e3e3e3"/></svg><div class="t" style="left:650.50px;top:722.80px;font-size:13px;font-weight:700;color:#343a40;letter-spacing:0.55px;">Estabelecimento</div><svg style="position:absolute;left:888.9px;top:720.8px;" width="8" height="16" viewBox="0 0 8 16"><path d="M4 0.6L7.6 6.6H0.4z" fill="#e3e3e3"/><path d="M4 15.2L7.6 9.0H0.4z" fill="#e3e3e3"/></svg><div class="t" style="left:921.40px;top:722.80px;font-size:13px;font-weight:700;color:#343a40;letter-spacing:0.55px;">Tipo</div><div class="t" style="left:1259.70px;top:722.80px;font-size:13px;font-weight:700;color:#343a40;letter-spacing:0.55px;">Status</div><div class="t" style="left:1438.60px;top:722.80px;font-size:13px;font-weight:700;color:#343a40;letter-spacing:0.55px;">Data Agendada</div><svg style="position:absolute;left:1663.7px;top:720.8px;" width="8" height="16" viewBox="0 0 8 16"><path d="M4 0.6L7.6 6.6H0.4z" fill="#e3e3e3"/><path d="M4 15.2L7.6 9.0H0.4z" fill="#8e8e8e"/></svg><div class="t" style="left:1696.20px;top:722.80px;font-size:13px;font-weight:700;color:#343a40;letter-spacing:0.55px;">Data Conclusão</div><svg style="position:absolute;left:1923.5px;top:720.8px;" width="8" height="16" viewBox="0 0 8 16"><path d="M4 0.6L7.6 6.6H0.4z" fill="#e3e3e3"/><path d="M4 15.2L7.6 9.0H0.4z" fill="#e3e3e3"/></svg><div class="t" style="left:1956.00px;top:722.80px;font-size:13px;font-weight:700;color:#343a40;letter-spacing:0.55px;">Técnico</div><div class="t" style="right:83.00px;top:722.80px;font-size:13px;font-weight:700;color:#343a40;letter-spacing:0.55px;">Ações</div><div class="t" style="left:324.30px;top:761.00px;font-size:13px;color:#495057;letter-spacing:0.3px;">30 282</div><div class="t" style="left:478.00px;top:761.00px;font-size:13px;color:#495057;letter-spacing:0.48px;">Burger King</div><div class="t" style="left:650.00px;top:761.00px;font-size:13px;color:#495057;letter-spacing:0.36px;">BK Leiria Olhalvas</div><div class="t" style="left:921px;top:758.3px;width:158px;height:19.2px;background:#556ee6;border-radius:4px;"></div><div class="t" style="left:926.00px;top:761.00px;font-size:13px;font-weight:700;color:#fff;letter-spacing:0.52px;">Manutenção Corretiva</div><div class="t" style="left:1259px;top:758.3px;width:78px;height:19.2px;background:#34c38f;border-radius:4px;"></div><div class="t" style="left:1264.50px;top:761.00px;font-size:13px;font-weight:700;color:#fff;letter-spacing:0.45px;">Concluída</div><div class="t" style="left:1438px;top:761.00px;font-size:13px;color:#495057;letter-spacing:0.86px;display:flex;align-items:flex-start">27/08/2025<svg style="margin-left:10.3px;margin-top:0px" width="15.5" height="13.8" viewBox="0 0 576 512"><path fill="#556ee6" d="M402.6 83.2l90.2 90.2c3.8 3.8 3.8 10 0 13.8L274.4 405.6l-92.8 10.3c-12.4 1.4-22.9-9.1-21.5-21.5l10.3-92.8L388.8 83.2c3.8-3.8 10-3.8 13.8 0zm162-22.9l-48.8-48.8c-15.2-15.2-39.9-15.2-55.2 0l-35.4 35.4c-3.8 3.8-3.8 10 0 13.8l90.2 90.2c3.8 3.8 10 3.8 13.8 0l35.4-35.4c15.2-15.3 15.2-40 0-55.2zM384 346.2V448H64V128h229.8c3.2 0 6.2-1.3 8.5-3.5l40-40c7.6-7.6 2.2-20.5-8.5-20.5H48C21.5 64 0 85.5 0 112v352c0 26.5 21.5 48 48 48h352c26.5 0 48-21.5 48-48V306.2c0-10.7-12.9-16-20.5-8.5l-40 40c-2.2 2.3-3.5 5.3-3.5 8.5z"/></svg></div><div class="t" style="left:1696.00px;top:761.00px;font-size:13px;color:#495057;letter-spacing:0.86px;">27/08/2025</div><div class="t" style="left:1956.00px;top:761.00px;font-size:13px;color:#495057;letter-spacing:1.0px;">nuno</div><div style="position:absolute;left:2430.2px;top:758.2px;width:30.6px;height:26.6px;background:#50a5f1;border-radius:3.5px"></div><svg style="position:absolute;left:2439px;top:766.5px;" width="13" height="9" viewBox="0 0 13 9"><path d="M0.5 4.5C2 1.8 4.4 0.5 6.5 0.5s4.5 1.3 6 4c-1.5 2.7-3.9 4-6 4s-4.5-1.3-6-4z" fill="#fff"/><circle cx="6.5" cy="4.5" r="2" fill="none" stroke="#50a5f1" stroke-width="1.1"/></svg><div style="position:absolute;left:313.5px;top:792.9px;width:2158px;height:1px;background:#eff2f7"></div><div class="t" style="left:324.30px;top:804.90px;font-size:13px;color:#495057;letter-spacing:0.3px;">30 282</div><div class="t" style="left:478.00px;top:804.90px;font-size:13px;color:#495057;letter-spacing:0.48px;">Burger King</div><div class="t" style="left:650.00px;top:804.90px;font-size:13px;color:#495057;letter-spacing:0.36px;">BK Leiria Olhalvas</div><div class="t" style="left:921px;top:802.2px;width:158px;height:19.2px;background:#556ee6;border-radius:4px;"></div><div class="t" style="left:926.00px;top:804.90px;font-size:13px;font-weight:700;color:#fff;letter-spacing:0.52px;">Manutenção Corretiva</div><div class="t" style="left:1259px;top:802.2px;width:78px;height:19.2px;background:#34c38f;border-radius:4px;"></div><div class="t" style="left:1264.50px;top:804.90px;font-size:13px;font-weight:700;color:#fff;letter-spacing:0.45px;">Concluída</div><div class="t" style="left:1438px;top:804.90px;font-size:13px;color:#495057;letter-spacing:0.86px;display:flex;align-items:flex-start">28/08/2025<svg style="margin-left:10.3px;margin-top:0px" width="15.5" height="13.8" viewBox="0 0 576 512"><path fill="#556ee6" d="M402.6 83.2l90.2 90.2c3.8 3.8 3.8 10 0 13.8L274.4 405.6l-92.8 10.3c-12.4 1.4-22.9-9.1-21.5-21.5l10.3-92.8L388.8 83.2c3.8-3.8 10-3.8 13.8 0zm162-22.9l-48.8-48.8c-15.2-15.2-39.9-15.2-55.2 0l-35.4 35.4c-3.8 3.8-3.8 10 0 13.8l90.2 90.2c3.8 3.8 10 3.8 13.8 0l35.4-35.4c15.2-15.3 15.2-40 0-55.2zM384 346.2V448H64V128h229.8c3.2 0 6.2-1.3 8.5-3.5l40-40c7.6-7.6 2.2-20.5-8.5-20.5H48C21.5 64 0 85.5 0 112v352c0 26.5 21.5 48 48 48h352c26.5 0 48-21.5 48-48V306.2c0-10.7-12.9-16-20.5-8.5l-40 40c-2.2 2.3-3.5 5.3-3.5 8.5z"/></svg></div><div class="t" style="left:1696.00px;top:804.90px;font-size:13px;color:#495057;letter-spacing:0.86px;">27/08/2025</div><div class="t" style="left:1956.00px;top:804.90px;font-size:13px;color:#495057;letter-spacing:1.0px;">nuno</div><div style="position:absolute;left:2430.2px;top:802.1px;width:30.6px;height:26.6px;background:#50a5f1;border-radius:3.5px"></div><svg style="position:absolute;left:2439px;top:810.4px;" width="13" height="9" viewBox="0 0 13 9"><path d="M0.5 4.5C2 1.8 4.4 0.5 6.5 0.5s4.5 1.3 6 4c-1.5 2.7-3.9 4-6 4s-4.5-1.3-6-4z" fill="#fff"/><circle cx="6.5" cy="4.5" r="2" fill="none" stroke="#50a5f1" stroke-width="1.1"/></svg><div style="position:absolute;left:313.5px;top:836.8px;width:2158px;height:1px;background:#eff2f7"></div><div class="t" style="left:324.30px;top:848.80px;font-size:13px;color:#495057;letter-spacing:0.3px;">17 491</div><div class="t" style="left:478.00px;top:848.80px;font-size:13px;color:#495057;letter-spacing:0.48px;">Burger King</div><div class="t" style="left:650.00px;top:848.80px;font-size:13px;color:#495057;letter-spacing:0.36px;">BK Leiria Shopping</div><div class="t" style="left:921px;top:846.1px;width:158px;height:19.2px;background:#556ee6;border-radius:4px;"></div><div class="t" style="left:926.00px;top:848.80px;font-size:13px;font-weight:700;color:#fff;letter-spacing:0.52px;">Manutenção Corretiva</div><div class="t" style="left:1259px;top:846.1px;width:78px;height:19.2px;background:#34c38f;border-radius:4px;"></div><div class="t" style="left:1264.50px;top:848.80px;font-size:13px;font-weight:700;color:#fff;letter-spacing:0.45px;">Concluída</div><div class="t" style="left:1438px;top:848.80px;font-size:13px;color:#495057;letter-spacing:0.86px;display:flex;align-items:flex-start">20/08/2025<svg style="margin-left:10.3px;margin-top:0px" width="15.5" height="13.8" viewBox="0 0 576 512"><path fill="#556ee6" d="M402.6 83.2l90.2 90.2c3.8 3.8 3.8 10 0 13.8L274.4 405.6l-92.8 10.3c-12.4 1.4-22.9-9.1-21.5-21.5l10.3-92.8L388.8 83.2c3.8-3.8 10-3.8 13.8 0zm162-22.9l-48.8-48.8c-15.2-15.2-39.9-15.2-55.2 0l-35.4 35.4c-3.8 3.8-3.8 10 0 13.8l90.2 90.2c3.8 3.8 10 3.8 13.8 0l35.4-35.4c15.2-15.3 15.2-40 0-55.2zM384 346.2V448H64V128h229.8c3.2 0 6.2-1.3 8.5-3.5l40-40c7.6-7.6 2.2-20.5-8.5-20.5H48C21.5 64 0 85.5 0 112v352c0 26.5 21.5 48 48 48h352c26.5 0 48-21.5 48-48V306.2c0-10.7-12.9-16-20.5-8.5l-40 40c-2.2 2.3-3.5 5.3-3.5 8.5z"/></svg></div><div class="t" style="left:1696.00px;top:848.80px;font-size:13px;color:#495057;letter-spacing:0.86px;">20/08/2025</div><div class="t" style="left:1956.00px;top:848.80px;font-size:13px;color:#495057;letter-spacing:1.0px;">nuno</div><div style="position:absolute;left:2430.2px;top:846.0px;width:30.6px;height:26.6px;background:#50a5f1;border-radius:3.5px"></div><svg style="position:absolute;left:2439px;top:854.3px;" width="13" height="9" viewBox="0 0 13 9"><path d="M0.5 4.5C2 1.8 4.4 0.5 6.5 0.5s4.5 1.3 6 4c-1.5 2.7-3.9 4-6 4s-4.5-1.3-6-4z" fill="#fff"/><circle cx="6.5" cy="4.5" r="2" fill="none" stroke="#50a5f1" stroke-width="1.1"/></svg><div style="position:absolute;left:313.5px;top:880.8px;width:2158px;height:1px;background:#eff2f7"></div><div class="t" style="left:324.30px;top:892.80px;font-size:13px;color:#495057;letter-spacing:0.3px;">17 491</div><div class="t" style="left:478.00px;top:892.80px;font-size:13px;color:#495057;letter-spacing:0.48px;">Burger King</div><div class="t" style="left:650.00px;top:892.80px;font-size:13px;color:#495057;letter-spacing:0.36px;">BK Leiria Shopping</div><div class="t" style="left:921px;top:890.1px;width:166px;height:19.2px;background:#6f42c1;border-radius:4px;"></div><div class="t" style="left:926.00px;top:892.80px;font-size:13px;font-weight:700;color:#fff;letter-spacing:0.52px;">Manutenção Preventiva</div><div class="t" style="left:1259px;top:890.1px;width:78px;height:19.2px;background:#34c38f;border-radius:4px;"></div><div class="t" style="left:1264.50px;top:892.80px;font-size:13px;font-weight:700;color:#fff;letter-spacing:0.45px;">Concluída</div><div class="t" style="left:1438px;top:892.80px;font-size:13px;color:#495057;letter-spacing:0.86px;display:flex;align-items:flex-start">19/08/2025<svg style="margin-left:10.3px;margin-top:0px" width="15.5" height="13.8" viewBox="0 0 576 512"><path fill="#556ee6" d="M402.6 83.2l90.2 90.2c3.8 3.8 3.8 10 0 13.8L274.4 405.6l-92.8 10.3c-12.4 1.4-22.9-9.1-21.5-21.5l10.3-92.8L388.8 83.2c3.8-3.8 10-3.8 13.8 0zm162-22.9l-48.8-48.8c-15.2-15.2-39.9-15.2-55.2 0l-35.4 35.4c-3.8 3.8-3.8 10 0 13.8l90.2 90.2c3.8 3.8 10 3.8 13.8 0l35.4-35.4c15.2-15.3 15.2-40 0-55.2zM384 346.2V448H64V128h229.8c3.2 0 6.2-1.3 8.5-3.5l40-40c7.6-7.6 2.2-20.5-8.5-20.5H48C21.5 64 0 85.5 0 112v352c0 26.5 21.5 48 48 48h352c26.5 0 48-21.5 48-48V306.2c0-10.7-12.9-16-20.5-8.5l-40 40c-2.2 2.3-3.5 5.3-3.5 8.5z"/></svg></div><div class="t" style="left:1696.00px;top:892.80px;font-size:13px;color:#495057;letter-spacing:0.86px;">25/08/2025</div><div class="t" style="left:1956.00px;top:892.80px;font-size:13px;color:#495057;letter-spacing:1.0px;">nuno</div><div style="position:absolute;left:2430.2px;top:890.0px;width:30.6px;height:26.6px;background:#50a5f1;border-radius:3.5px"></div><svg style="position:absolute;left:2439px;top:898.3px;" width="13" height="9" viewBox="0 0 13 9"><path d="M0.5 4.5C2 1.8 4.4 0.5 6.5 0.5s4.5 1.3 6 4c-1.5 2.7-3.9 4-6 4s-4.5-1.3-6-4z" fill="#fff"/><circle cx="6.5" cy="4.5" r="2" fill="none" stroke="#50a5f1" stroke-width="1.1"/></svg><div style="position:absolute;left:313.5px;top:924.8px;width:2158px;height:1px;background:#eff2f7"></div><div class="t" style="left:324.30px;top:936.80px;font-size:13px;color:#495057;letter-spacing:0.3px;">31 377</div><div class="t" style="left:478.00px;top:936.80px;font-size:13px;color:#495057;letter-spacing:0.48px;">Burger King</div><div class="t" style="left:650.00px;top:936.80px;font-size:13px;color:#495057;letter-spacing:0.36px;">BK Batalha</div><div class="t" style="left:921px;top:934.1px;width:166px;height:19.2px;background:#6f42c1;border-radius:4px;"></div><div class="t" style="left:926.00px;top:936.80px;font-size:13px;font-weight:700;color:#fff;letter-spacing:0.52px;">Manutenção Preventiva</div><div class="t" style="left:1259px;top:934.1px;width:78px;height:19.2px;background:#34c38f;border-radius:4px;"></div><div class="t" style="left:1264.50px;top:936.80px;font-size:13px;font-weight:700;color:#fff;letter-spacing:0.45px;">Concluída</div><div class="t" style="left:1438px;top:936.80px;font-size:13px;color:#495057;letter-spacing:0.86px;display:flex;align-items:flex-start">30/08/2025<svg style="margin-left:10.3px;margin-top:0px" width="15.5" height="13.8" viewBox="0 0 576 512"><path fill="#556ee6" d="M402.6 83.2l90.2 90.2c3.8 3.8 3.8 10 0 13.8L274.4 405.6l-92.8 10.3c-12.4 1.4-22.9-9.1-21.5-21.5l10.3-92.8L388.8 83.2c3.8-3.8 10-3.8 13.8 0zm162-22.9l-48.8-48.8c-15.2-15.2-39.9-15.2-55.2 0l-35.4 35.4c-3.8 3.8-3.8 10 0 13.8l90.2 90.2c3.8 3.8 10 3.8 13.8 0l35.4-35.4c15.2-15.3 15.2-40 0-55.2zM384 346.2V448H64V128h229.8c3.2 0 6.2-1.3 8.5-3.5l40-40c7.6-7.6 2.2-20.5-8.5-20.5H48C21.5 64 0 85.5 0 112v352c0 26.5 21.5 48 48 48h352c26.5 0 48-21.5 48-48V306.2c0-10.7-12.9-16-20.5-8.5l-40 40c-2.2 2.3-3.5 5.3-3.5 8.5z"/></svg></div><div class="t" style="left:1696.00px;top:936.80px;font-size:13px;color:#495057;letter-spacing:0.86px;">27/08/2025</div><div style="position:absolute;left:1956.5px;top:932.0999999999999px;width:181px;height:22.6px;background:#fff3cd;border-radius:4px"></div><svg style="position:absolute;left:1961.5px;top:935.8px;" width="15" height="14" viewBox="0 0 15 14"><path d="M7.5 0.8L14.6 13.2H0.4z" fill="#856404" stroke="#856404" stroke-width="0.8" stroke-linejoin="round"/><rect x="6.6" y="4.6" width="1.8" height="4.8" rx="0.6" fill="#fff"/><circle cx="7.5" cy="11" r="1" fill="#fff"/></svg><div class="t" style="left:1980.70px;top:936.80px;font-size:13px;color:#856404;letter-spacing:0.86px;">Sem técnico associado</div><div style="position:absolute;left:2395.2px;top:934.0px;width:30px;height:26.6px;background:#50a5f1;border-radius:3.5px"></div><svg style="position:absolute;left:2403.7px;top:942.3px;" width="13" height="9" viewBox="0 0 13 9"><path d="M0.5 4.5C2 1.8 4.4 0.5 6.5 0.5s4.5 1.3 6 4c-1.5 2.7-3.9 4-6 4s-4.5-1.3-6-4z" fill="#fff"/><circle cx="6.5" cy="4.5" r="2" fill="none" stroke="#50a5f1" stroke-width="1.1"/></svg><div style="position:absolute;left:2429.5px;top:934.0px;width:31px;height:26.6px;background:#f1b44c;border-radius:3.5px"></div><svg style="position:absolute;left:2437px;top:939.8px;" width="16" height="13" viewBox="0 0 16 13"><circle cx="6" cy="3.8" r="3.3" fill="#fff"/><path d="M0.5 12.5c0-3.5 2.2-5 5.5-5s5.5 1.5 5.5 5z" fill="#fff"/><path d="M12.8 3v5M10.3 5.5h5" stroke="#fff" stroke-width="1.7"/></svg><div style="position:absolute;left:313.5px;top:969.0px;width:2158px;height:1px;background:#eff2f7"></div><div class="t" style="left:324.30px;top:981.00px;font-size:13px;color:#495057;letter-spacing:0.3px;">30 282</div><div class="t" style="left:478.00px;top:981.00px;font-size:13px;color:#495057;letter-spacing:0.48px;">Burger King</div><div class="t" style="left:650.00px;top:981.00px;font-size:13px;color:#495057;letter-spacing:0.36px;">BK Leiria Olhalvas</div><div class="t" style="left:921px;top:978.3px;width:158px;height:19.2px;background:#556ee6;border-radius:4px;"></div><div class="t" style="left:926.00px;top:981.00px;font-size:13px;font-weight:700;color:#fff;letter-spacing:0.52px;">Manutenção Corretiva</div><div class="t" style="left:1259px;top:978.3px;width:80px;height:19.2px;background:#50a5f1;border-radius:4px;"></div><div class="t" style="left:1264.50px;top:981.00px;font-size:13px;font-weight:700;color:#fff;letter-spacing:0.55px;">Agendada</div><svg style="position:absolute;left:1437.8px;top:980.5px;" width="15" height="14" viewBox="0 0 15 14"><path d="M7.5 0.8L14.6 13.2H0.4z" fill="#e3161b" stroke="#e3161b" stroke-width="0.8" stroke-linejoin="round"/><rect x="6.6" y="4.6" width="1.8" height="4.8" rx="0.6" fill="#fff"/><circle cx="7.5" cy="11" r="1" fill="#fff"/></svg><div class="t" style="left:1456.7px;top:981.00px;font-size:13px;color:#e3161b;letter-spacing:0.86px;display:flex;align-items:flex-start">29/08/2025<svg style="margin-left:10.3px;margin-top:0px" width="15.5" height="13.8" viewBox="0 0 576 512"><path fill="#556ee6" d="M402.6 83.2l90.2 90.2c3.8 3.8 3.8 10 0 13.8L274.4 405.6l-92.8 10.3c-12.4 1.4-22.9-9.1-21.5-21.5l10.3-92.8L388.8 83.2c3.8-3.8 10-3.8 13.8 0zm162-22.9l-48.8-48.8c-15.2-15.2-39.9-15.2-55.2 0l-35.4 35.4c-3.8 3.8-3.8 10 0 13.8l90.2 90.2c3.8 3.8 10 3.8 13.8 0l35.4-35.4c15.2-15.3 15.2-40 0-55.2zM384 346.2V448H64V128h229.8c3.2 0 6.2-1.3 8.5-3.5l40-40c7.6-7.6 2.2-20.5-8.5-20.5H48C21.5 64 0 85.5 0 112v352c0 26.5 21.5 48 48 48h352c26.5 0 48-21.5 48-48V306.2c0-10.7-12.9-16-20.5-8.5l-40 40c-2.2 2.3-3.5 5.3-3.5 8.5z"/></svg></div><div class="t" style="left:1696.00px;top:981.00px;font-size:13px;color:#495057;letter-spacing:0.86px;">-</div><div class="t" style="left:1956.00px;top:981.00px;font-size:13px;color:#495057;letter-spacing:1.0px;">nuno</div><div style="position:absolute;left:2430.2px;top:978.2px;width:30.6px;height:26.6px;background:#50a5f1;border-radius:3.5px"></div><svg style="position:absolute;left:2439px;top:986.5px;" width="13" height="9" viewBox="0 0 13 9"><path d="M0.5 4.5C2 1.8 4.4 0.5 6.5 0.5s4.5 1.3 6 4c-1.5 2.7-3.9 4-6 4s-4.5-1.3-6-4z" fill="#fff"/><circle cx="6.5" cy="4.5" r="2" fill="none" stroke="#50a5f1" stroke-width="1.1"/></svg><div style="position:absolute;left:313.5px;top:1012.8px;width:2158px;height:1px;background:#eff2f7"></div><div class="t" style="left:324.30px;top:1024.80px;font-size:13px;color:#495057;letter-spacing:0.3px;">30 282</div><div class="t" style="left:478.00px;top:1024.80px;font-size:13px;color:#495057;letter-spacing:0.48px;">Burger King</div><div class="t" style="left:650.00px;top:1024.80px;font-size:13px;color:#495057;letter-spacing:0.36px;">BK Leiria Olhalvas</div><div class="t" style="left:921px;top:1022.1px;width:158px;height:19.2px;background:#556ee6;border-radius:4px;"></div><div class="t" style="left:926.00px;top:1024.80px;font-size:13px;font-weight:700;color:#fff;letter-spacing:0.52px;">Manutenção Corretiva</div><div class="t" style="left:1259px;top:1022.1px;width:80px;height:19.2px;background:#50a5f1;border-radius:4px;"></div><div class="t" style="left:1264.50px;top:1024.80px;font-size:13px;font-weight:700;color:#fff;letter-spacing:0.55px;">Agendada</div><svg style="position:absolute;left:1437.8px;top:1024.3px;" width="15" height="14" viewBox="0 0 15 14"><path d="M7.5 0.8L14.6 13.2H0.4z" fill="#e3161b" stroke="#e3161b" stroke-width="0.8" stroke-linejoin="round"/><rect x="6.6" y="4.6" width="1.8" height="4.8" rx="0.6" fill="#fff"/><circle cx="7.5" cy="11" r="1" fill="#fff"/></svg><div class="t" style="left:1456.7px;top:1024.80px;font-size:13px;color:#e3161b;letter-spacing:0.86px;display:flex;align-items:flex-start">31/08/2025<svg style="margin-left:10.3px;margin-top:0px" width="15.5" height="13.8" viewBox="0 0 576 512"><path fill="#556ee6" d="M402.6 83.2l90.2 90.2c3.8 3.8 3.8 10 0 13.8L274.4 405.6l-92.8 10.3c-12.4 1.4-22.9-9.1-21.5-21.5l10.3-92.8L388.8 83.2c3.8-3.8 10-3.8 13.8 0zm162-22.9l-48.8-48.8c-15.2-15.2-39.9-15.2-55.2 0l-35.4 35.4c-3.8 3.8-3.8 10 0 13.8l90.2 90.2c3.8 3.8 10 3.8 13.8 0l35.4-35.4c15.2-15.3 15.2-40 0-55.2zM384 346.2V448H64V128h229.8c3.2 0 6.2-1.3 8.5-3.5l40-40c7.6-7.6 2.2-20.5-8.5-20.5H48C21.5 64 0 85.5 0 112v352c0 26.5 21.5 48 48 48h352c26.5 0 48-21.5 48-48V306.2c0-10.7-12.9-16-20.5-8.5l-40 40c-2.2 2.3-3.5 5.3-3.5 8.5z"/></svg></div><div class="t" style="left:1696.00px;top:1024.80px;font-size:13px;color:#495057;letter-spacing:0.86px;">-</div><div style="position:absolute;left:1956.5px;top:1020.0999999999999px;width:181px;height:22.6px;background:#fff3cd;border-radius:4px"></div><svg style="position:absolute;left:1961.5px;top:1023.8px;" width="15" height="14" viewBox="0 0 15 14"><path d="M7.5 0.8L14.6 13.2H0.4z" fill="#856404" stroke="#856404" stroke-width="0.8" stroke-linejoin="round"/><rect x="6.6" y="4.6" width="1.8" height="4.8" rx="0.6" fill="#fff"/><circle cx="7.5" cy="11" r="1" fill="#fff"/></svg><div class="t" style="left:1980.70px;top:1024.80px;font-size:13px;color:#856404;letter-spacing:0.86px;">Sem técnico associado</div><div style="position:absolute;left:2395.2px;top:1022.0px;width:30px;height:26.6px;background:#50a5f1;border-radius:3.5px"></div><svg style="position:absolute;left:2403.7px;top:1030.3px;" width="13" height="9" viewBox="0 0 13 9"><path d="M0.5 4.5C2 1.8 4.4 0.5 6.5 0.5s4.5 1.3 6 4c-1.5 2.7-3.9 4-6 4s-4.5-1.3-6-4z" fill="#fff"/><circle cx="6.5" cy="4.5" r="2" fill="none" stroke="#50a5f1" stroke-width="1.1"/></svg><div style="position:absolute;left:2429.5px;top:1022.0px;width:31px;height:26.6px;background:#f1b44c;border-radius:3.5px"></div><svg style="position:absolute;left:2437px;top:1027.8px;" width="16" height="13" viewBox="0 0 16 13"><circle cx="6" cy="3.8" r="3.3" fill="#fff"/><path d="M0.5 12.5c0-3.5 2.2-5 5.5-5s5.5 1.5 5.5 5z" fill="#fff"/><path d="M12.8 3v5M10.3 5.5h5" stroke="#fff" stroke-width="1.7"/></svg><div style="position:absolute;left:313.5px;top:1057.8px;width:2158px;height:1px;background:#eff2f7"></div><div class="t" style="left:324.30px;top:1069.80px;font-size:13px;color:#495057;letter-spacing:0.3px;">31 376</div><div class="t" style="left:478.00px;top:1069.80px;font-size:13px;color:#495057;letter-spacing:0.48px;">Burger King</div><div class="t" style="left:650.00px;top:1069.80px;font-size:13px;color:#495057;letter-spacing:0.36px;">BK Leiria Leroy</div><div class="t" style="left:921px;top:1067.1px;width:158px;height:19.2px;background:#556ee6;border-radius:4px;"></div><div class="t" style="left:926.00px;top:1069.80px;font-size:13px;font-weight:700;color:#fff;letter-spacing:0.52px;">Manutenção Corretiva</div><div class="t" style="left:1259px;top:1067.1px;width:80px;height:19.2px;background:#50a5f1;border-radius:4px;"></div><div class="t" style="left:1264.50px;top:1069.80px;font-size:13px;font-weight:700;color:#fff;letter-spacing:0.55px;">Agendada</div><svg style="position:absolute;left:1437.8px;top:1069.3px;" width="15" height="14" viewBox="0 0 15 14"><path d="M7.5 0.8L14.6 13.2H0.4z" fill="#e3161b" stroke="#e3161b" stroke-width="0.8" stroke-linejoin="round"/><rect x="6.6" y="4.6" width="1.8" height="4.8" rx="0.6" fill="#fff"/><circle cx="7.5" cy="11" r="1" fill="#fff"/></svg><div class="t" style="left:1456.7px;top:1069.80px;font-size:13px;color:#e3161b;letter-spacing:0.86px;display:flex;align-items:flex-start">30/08/2025<svg style="margin-left:10.3px;margin-top:0px" width="15.5" height="13.8" viewBox="0 0 576 512"><path fill="#556ee6" d="M402.6 83.2l90.2 90.2c3.8 3.8 3.8 10 0 13.8L274.4 405.6l-92.8 10.3c-12.4 1.4-22.9-9.1-21.5-21.5l10.3-92.8L388.8 83.2c3.8-3.8 10-3.8 13.8 0zm162-22.9l-48.8-48.8c-15.2-15.2-39.9-15.2-55.2 0l-35.4 35.4c-3.8 3.8-3.8 10 0 13.8l90.2 90.2c3.8 3.8 10 3.8 13.8 0l35.4-35.4c15.2-15.3 15.2-40 0-55.2zM384 346.2V448H64V128h229.8c3.2 0 6.2-1.3 8.5-3.5l40-40c7.6-7.6 2.2-20.5-8.5-20.5H48C21.5 64 0 85.5 0 112v352c0 26.5 21.5 48 48 48h352c26.5 0 48-21.5 48-48V306.2c0-10.7-12.9-16-20.5-8.5l-40 40c-2.2 2.3-3.5 5.3-3.5 8.5z"/></svg></div><div class="t" style="left:1696.00px;top:1069.80px;font-size:13px;color:#495057;letter-spacing:0.86px;">-</div><div class="t" style="left:1956.00px;top:1069.80px;font-size:13px;color:#495057;letter-spacing:1.0px;">nuno</div><div style="position:absolute;left:2430.2px;top:1067.0px;width:30.6px;height:26.6px;background:#50a5f1;border-radius:3.5px"></div><svg style="position:absolute;left:2439px;top:1075.3px;" width="13" height="9" viewBox="0 0 13 9"><path d="M0.5 4.5C2 1.8 4.4 0.5 6.5 0.5s4.5 1.3 6 4c-1.5 2.7-3.9 4-6 4s-4.5-1.3-6-4z" fill="#fff"/><circle cx="6.5" cy="4.5" r="2" fill="none" stroke="#50a5f1" stroke-width="1.1"/></svg><div style="position:absolute;left:313.5px;top:1102.0px;width:2158px;height:1px;background:#eff2f7"></div><div class="t" style="left:324.30px;top:1114.00px;font-size:13px;color:#495057;letter-spacing:0.3px;">31 376</div><div class="t" style="left:478.00px;top:1114.00px;font-size:13px;color:#495057;letter-spacing:0.48px;">Burger King</div><div class="t" style="left:650.00px;top:1114.00px;font-size:13px;color:#495057;letter-spacing:0.36px;">BK Leiria Leroy</div><div class="t" style="left:921px;top:1111.3px;width:158px;height:19.2px;background:#556ee6;border-radius:4px;"></div><div class="t" style="left:926.00px;top:1114.00px;font-size:13px;font-weight:700;color:#fff;letter-spacing:0.52px;">Manutenção Corretiva</div><div class="t" style="left:1259px;top:1111.3px;width:80px;height:19.2px;background:#50a5f1;border-radius:4px;"></div><div class="t" style="left:1264.50px;top:1114.00px;font-size:13px;font-weight:700;color:#fff;letter-spacing:0.55px;">Agendada</div><svg style="position:absolute;left:1437.8px;top:1113.5px;" width="15" height="14" viewBox="0 0 15 14"><path d="M7.5 0.8L14.6 13.2H0.4z" fill="#e3161b" stroke="#e3161b" stroke-width="0.8" stroke-linejoin="round"/><rect x="6.6" y="4.6" width="1.8" height="4.8" rx="0.6" fill="#fff"/><circle cx="7.5" cy="11" r="1" fill="#fff"/></svg><div class="t" style="left:1456.7px;top:1114.00px;font-size:13px;color:#e3161b;letter-spacing:0.86px;display:flex;align-items:flex-start">20/08/2025<svg style="margin-left:10.3px;margin-top:0px" width="15.5" height="13.8" viewBox="0 0 576 512"><path fill="#556ee6" d="M402.6 83.2l90.2 90.2c3.8 3.8 3.8 10 0 13.8L274.4 405.6l-92.8 10.3c-12.4 1.4-22.9-9.1-21.5-21.5l10.3-92.8L388.8 83.2c3.8-3.8 10-3.8 13.8 0zm162-22.9l-48.8-48.8c-15.2-15.2-39.9-15.2-55.2 0l-35.4 35.4c-3.8 3.8-3.8 10 0 13.8l90.2 90.2c3.8 3.8 10 3.8 13.8 0l35.4-35.4c15.2-15.3 15.2-40 0-55.2zM384 346.2V448H64V128h229.8c3.2 0 6.2-1.3 8.5-3.5l40-40c7.6-7.6 2.2-20.5-8.5-20.5H48C21.5 64 0 85.5 0 112v352c0 26.5 21.5 48 48 48h352c26.5 0 48-21.5 48-48V306.2c0-10.7-12.9-16-20.5-8.5l-40 40c-2.2 2.3-3.5 5.3-3.5 8.5z"/></svg></div><div class="t" style="left:1696.00px;top:1114.00px;font-size:13px;color:#495057;letter-spacing:0.86px;">-</div><div class="t" style="left:1956.00px;top:1114.00px;font-size:13px;color:#495057;letter-spacing:1.0px;">nuno</div><div style="position:absolute;left:2430.2px;top:1111.2px;width:30.6px;height:26.6px;background:#50a5f1;border-radius:3.5px"></div><svg style="position:absolute;left:2439px;top:1119.5px;" width="13" height="9" viewBox="0 0 13 9"><path d="M0.5 4.5C2 1.8 4.4 0.5 6.5 0.5s4.5 1.3 6 4c-1.5 2.7-3.9 4-6 4s-4.5-1.3-6-4z" fill="#fff"/><circle cx="6.5" cy="4.5" r="2" fill="none" stroke="#50a5f1" stroke-width="1.1"/></svg><div style="position:absolute;left:313.5px;top:1146.0px;width:2158px;height:1px;background:#eff2f7"></div><div class="t" style="left:324.30px;top:1158.00px;font-size:13px;color:#495057;letter-spacing:0.3px;">31 376</div><div class="t" style="left:478.00px;top:1158.00px;font-size:13px;color:#495057;letter-spacing:0.48px;">Burger King</div><div class="t" style="left:650.00px;top:1158.00px;font-size:13px;color:#495057;letter-spacing:0.36px;">BK Leiria Leroy</div><div class="t" style="left:921px;top:1155.3px;width:158px;height:19.2px;background:#556ee6;border-radius:4px;"></div><div class="t" style="left:926.00px;top:1158.00px;font-size:13px;font-weight:700;color:#fff;letter-spacing:0.52px;">Manutenção Corretiva</div><div class="t" style="left:1259px;top:1155.3px;width:80px;height:19.2px;background:#50a5f1;border-radius:4px;"></div><div class="t" style="left:1264.50px;top:1158.00px;font-size:13px;font-weight:700;color:#fff;letter-spacing:0.55px;">Agendada</div><svg style="position:absolute;left:1437.8px;top:1157.5px;" width="15" height="14" viewBox="0 0 15 14"><path d="M7.5 0.8L14.6 13.2H0.4z" fill="#e3161b" stroke="#e3161b" stroke-width="0.8" stroke-linejoin="round"/><rect x="6.6" y="4.6" width="1.8" height="4.8" rx="0.6" fill="#fff"/><circle cx="7.5" cy="11" r="1" fill="#fff"/></svg><div class="t" style="left:1456.7px;top:1158.00px;font-size:13px;color:#e3161b;letter-spacing:0.86px;display:flex;align-items:flex-start">22/08/2025<svg style="margin-left:10.3px;margin-top:0px" width="15.5" height="13.8" viewBox="0 0 576 512"><path fill="#556ee6" d="M402.6 83.2l90.2 90.2c3.8 3.8 3.8 10 0 13.8L274.4 405.6l-92.8 10.3c-12.4 1.4-22.9-9.1-21.5-21.5l10.3-92.8L388.8 83.2c3.8-3.8 10-3.8 13.8 0zm162-22.9l-48.8-48.8c-15.2-15.2-39.9-15.2-55.2 0l-35.4 35.4c-3.8 3.8-3.8 10 0 13.8l90.2 90.2c3.8 3.8 10 3.8 13.8 0l35.4-35.4c15.2-15.3 15.2-40 0-55.2zM384 346.2V448H64V128h229.8c3.2 0 6.2-1.3 8.5-3.5l40-40c7.6-7.6 2.2-20.5-8.5-20.5H48C21.5 64 0 85.5 0 112v352c0 26.5 21.5 48 48 48h352c26.5 0 48-21.5 48-48V306.2c0-10.7-12.9-16-20.5-8.5l-40 40c-2.2 2.3-3.5 5.3-3.5 8.5z"/></svg></div><div class="t" style="left:1696.00px;top:1158.00px;font-size:13px;color:#495057;letter-spacing:0.86px;">-</div><div class="t" style="left:1956.00px;top:1158.00px;font-size:13px;color:#495057;letter-spacing:1.0px;">nuno</div><div style="position:absolute;left:2430.2px;top:1155.2px;width:30.6px;height:26.6px;background:#50a5f1;border-radius:3.5px"></div><svg style="position:absolute;left:2439px;top:1163.5px;" width="13" height="9" viewBox="0 0 13 9"><path d="M0.5 4.5C2 1.8 4.4 0.5 6.5 0.5s4.5 1.3 6 4c-1.5 2.7-3.9 4-6 4s-4.5-1.3-6-4z" fill="#fff"/><circle cx="6.5" cy="4.5" r="2" fill="none" stroke="#50a5f1" stroke-width="1.1"/></svg><div style="position:absolute;left:313.5px;top:1189.9px;width:2158px;height:1px;background:#eff2f7"></div><div class="t" style="left:324.30px;top:1201.90px;font-size:13px;color:#495057;letter-spacing:0.3px;">17 491</div><div class="t" style="left:478.00px;top:1201.90px;font-size:13px;color:#495057;letter-spacing:0.48px;">Burger King</div><div class="t" style="left:650.00px;top:1201.90px;font-size:13px;color:#495057;letter-spacing:0.36px;">BK Leiria Shopping</div><div class="t" style="left:921px;top:1199.2px;width:158px;height:19.2px;background:#556ee6;border-radius:4px;"></div><div class="t" style="left:926.00px;top:1201.90px;font-size:13px;font-weight:700;color:#fff;letter-spacing:0.52px;">Manutenção Corretiva</div><div class="t" style="left:1259px;top:1199.2px;width:80px;height:19.2px;background:#50a5f1;border-radius:4px;"></div><div class="t" style="left:1264.50px;top:1201.90px;font-size:13px;font-weight:700;color:#fff;letter-spacing:0.55px;">Agendada</div><svg style="position:absolute;left:1437.8px;top:1201.4px;" width="15" height="14" viewBox="0 0 15 14"><path d="M7.5 0.8L14.6 13.2H0.4z" fill="#e3161b" stroke="#e3161b" stroke-width="0.8" stroke-linejoin="round"/><rect x="6.6" y="4.6" width="1.8" height="4.8" rx="0.6" fill="#fff"/><circle cx="7.5" cy="11" r="1" fill="#fff"/></svg><div class="t" style="left:1456.7px;top:1201.90px;font-size:13px;color:#e3161b;letter-spacing:0.86px;display:flex;align-items:flex-start">28/08/2025<svg style="margin-left:10.3px;margin-top:0px" width="15.5" height="13.8" viewBox="0 0 576 512"><path fill="#556ee6" d="M402.6 83.2l90.2 90.2c3.8 3.8 3.8 10 0 13.8L274.4 405.6l-92.8 10.3c-12.4 1.4-22.9-9.1-21.5-21.5l10.3-92.8L388.8 83.2c3.8-3.8 10-3.8 13.8 0zm162-22.9l-48.8-48.8c-15.2-15.2-39.9-15.2-55.2 0l-35.4 35.4c-3.8 3.8-3.8 10 0 13.8l90.2 90.2c3.8 3.8 10 3.8 13.8 0l35.4-35.4c15.2-15.3 15.2-40 0-55.2zM384 346.2V448H64V128h229.8c3.2 0 6.2-1.3 8.5-3.5l40-40c7.6-7.6 2.2-20.5-8.5-20.5H48C21.5 64 0 85.5 0 112v352c0 26.5 21.5 48 48 48h352c26.5 0 48-21.5 48-48V306.2c0-10.7-12.9-16-20.5-8.5l-40 40c-2.2 2.3-3.5 5.3-3.5 8.5z"/></svg></div><div class="t" style="left:1696.00px;top:1201.90px;font-size:13px;color:#495057;letter-spacing:0.86px;">-</div><div class="t" style="left:1956.00px;top:1201.90px;font-size:13px;color:#495057;letter-spacing:1.0px;">nuno</div><div style="position:absolute;left:2430.2px;top:1199.1000000000001px;width:30.6px;height:26.6px;background:#50a5f1;border-radius:3.5px"></div><svg style="position:absolute;left:2439px;top:1207.4px;" width="13" height="9" viewBox="0 0 13 9"><path d="M0.5 4.5C2 1.8 4.4 0.5 6.5 0.5s4.5 1.3 6 4c-1.5 2.7-3.9 4-6 4s-4.5-1.3-6-4z" fill="#fff"/><circle cx="6.5" cy="4.5" r="2" fill="none" stroke="#50a5f1" stroke-width="1.1"/></svg><div style="position:absolute;left:313.5px;top:1233.9px;width:2158px;height:1px;background:#eff2f7"></div><div class="t" style="left:324.30px;top:1245.90px;font-size:13px;color:#495057;letter-spacing:0.3px;">30 286</div><div class="t" style="left:478.00px;top:1245.90px;font-size:13px;color:#495057;letter-spacing:0.48px;">Burger King</div><div class="t" style="left:650.00px;top:1245.90px;font-size:13px;color:#495057;letter-spacing:0.36px;">BK Alcobaça</div><div class="t" style="left:921px;top:1243.2px;width:158px;height:19.2px;background:#556ee6;border-radius:4px;"></div><div class="t" style="left:926.00px;top:1245.90px;font-size:13px;font-weight:700;color:#fff;letter-spacing:0.52px;">Manutenção Corretiva</div><div class="t" style="left:1259px;top:1243.2px;width:80px;height:19.2px;background:#50a5f1;border-radius:4px;"></div><div class="t" style="left:1264.50px;top:1245.90px;font-size:13px;font-weight:700;color:#fff;letter-spacing:0.55px;">Agendada</div><svg style="position:absolute;left:1437.8px;top:1245.4px;" width="15" height="14" viewBox="0 0 15 14"><path d="M7.5 0.8L14.6 13.2H0.4z" fill="#e3161b" stroke="#e3161b" stroke-width="0.8" stroke-linejoin="round"/><rect x="6.6" y="4.6" width="1.8" height="4.8" rx="0.6" fill="#fff"/><circle cx="7.5" cy="11" r="1" fill="#fff"/></svg><div class="t" style="left:1456.7px;top:1245.90px;font-size:13px;color:#e3161b;letter-spacing:0.86px;display:flex;align-items:flex-start">18/08/2025<svg style="margin-left:10.3px;margin-top:0px" width="15.5" height="13.8" viewBox="0 0 576 512"><path fill="#556ee6" d="M402.6 83.2l90.2 90.2c3.8 3.8 3.8 10 0 13.8L274.4 405.6l-92.8 10.3c-12.4 1.4-22.9-9.1-21.5-21.5l10.3-92.8L388.8 83.2c3.8-3.8 10-3.8 13.8 0zm162-22.9l-48.8-48.8c-15.2-15.2-39.9-15.2-55.2 0l-35.4 35.4c-3.8 3.8-3.8 10 0 13.8l90.2 90.2c3.8 3.8 10 3.8 13.8 0l35.4-35.4c15.2-15.3 15.2-40 0-55.2zM384 346.2V448H64V128h229.8c3.2 0 6.2-1.3 8.5-3.5l40-40c7.6-7.6 2.2-20.5-8.5-20.5H48C21.5 64 0 85.5 0 112v352c0 26.5 21.5 48 48 48h352c26.5 0 48-21.5 48-48V306.2c0-10.7-12.9-16-20.5-8.5l-40 40c-2.2 2.3-3.5 5.3-3.5 8.5z"/></svg></div><div class="t" style="left:1696.00px;top:1245.90px;font-size:13px;color:#495057;letter-spacing:0.86px;">-</div><div class="t" style="left:1956.00px;top:1245.90px;font-size:13px;color:#495057;letter-spacing:1.0px;">nuno</div><div style="position:absolute;left:2430.2px;top:1243.1000000000001px;width:30.6px;height:26.6px;background:#50a5f1;border-radius:3.5px"></div><svg style="position:absolute;left:2439px;top:1251.4px;" width="13" height="9" viewBox="0 0 13 9"><path d="M0.5 4.5C2 1.8 4.4 0.5 6.5 0.5s4.5 1.3 6 4c-1.5 2.7-3.9 4-6 4s-4.5-1.3-6-4z" fill="#fff"/><circle cx="6.5" cy="4.5" r="2" fill="none" stroke="#50a5f1" stroke-width="1.1"/></svg>
</body></html>
